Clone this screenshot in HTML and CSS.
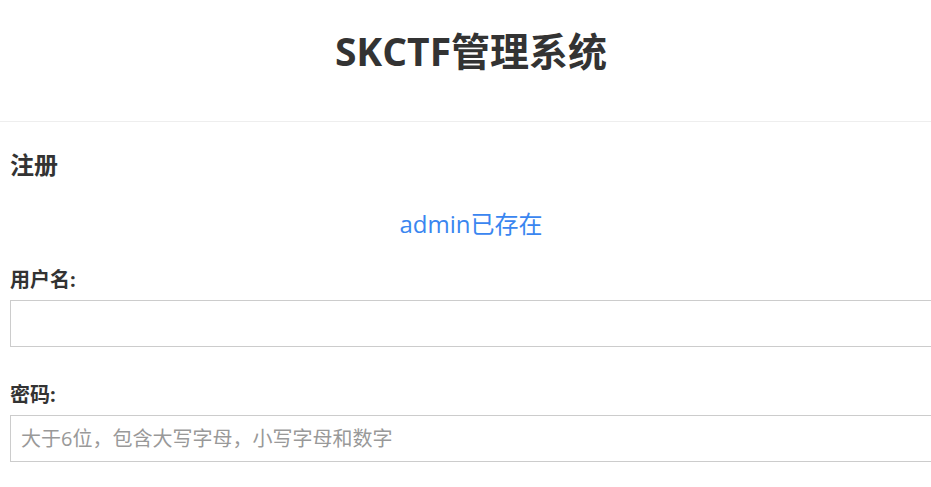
FILE: index.html
```html
<!DOCTYPE html>
<html lang="zh">
<head>
<meta charset="utf-8">
<title>SKCTF管理系统</title>
<link rel="stylesheet" href="styles.css">
</head>
<body>
<div class="page">
  <header class="site-header">
    <h1 class="site-title">SKCTF管理系统</h1>
  </header>
  <main class="content">
    <h3 class="section-title">注册</h3>
    <p class="message">admin已存在</p>
    <form class="form">
      <div class="field">
        <label class="field-label">用户名:</label>
        <input class="field-input" type="text">
      </div>
      <div class="field">
        <label class="field-label">密码:</label>
        <input class="field-input" type="password" placeholder="大于6位，包含大写字母，小写字母和数字">
      </div>
    </form>
  </main>
</div>
</body>
</html>
```
FILE: styles.css
```css
html, body {
  margin: 0;
  padding: 0;
  background: #fff;
  overflow: hidden;
}
body {
  font-family: "Open Sans", "Noto Sans CJK SC", sans-serif;
  color: #333;
}
.page {
  width: 942px;
}
.site-header {
  height: 121px;
  border-bottom: 1px solid #eee;
  display: flex;
  align-items: center;
  justify-content: center;
}
.site-title {
  margin: 0;
  font-size: 39px;
  line-height: 48px;
  font-weight: 700;
  color: #333;
  padding-bottom: 20px;
}
.content {
  padding: 0 10px;
}
.section-title {
  margin: 0;
  padding-top: 28px;
  font-size: 24px;
  line-height: 30px;
  font-weight: 700;
}
.message {
  margin: 0;
  padding-top: 29px;
  text-align: center;
  font-size: 24px;
  line-height: 30px;
  color: #3a86f0;
}
.form {
  display: flex;
  flex-direction: column;
  gap: 35px;
  padding-top: 28px;
}
.field {
  display: flex;
  flex-direction: column;
  gap: 7px;
}
.field-label {
  font-size: 20px;
  line-height: 26px;
  font-weight: 700;
}
.field-input {
  box-sizing: border-box;
  height: 47px;
  width: 100%;
  border: 1px solid #ccc;
  border-radius: 0;
  padding: 0 10px;
  font-family: "Open Sans", "Noto Sans CJK SC", sans-serif;
  font-size: 20px;
  color: #555;
  outline: none;
  background: #fff;
}
.field-input::placeholder {
  color: #999;
}
```
